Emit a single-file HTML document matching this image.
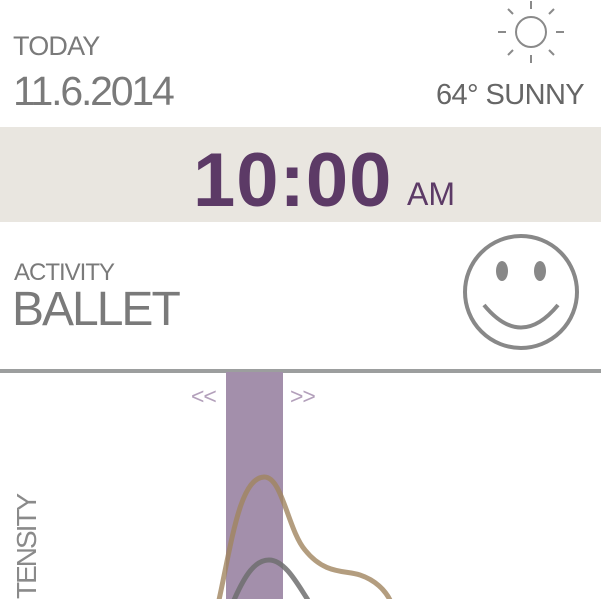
<!DOCTYPE html>
<html><head><style>
body{margin:0;width:601px;height:599px;overflow:hidden;background:#fff;font-family:"Liberation Sans",sans-serif;position:relative}
.t{position:absolute;color:#7a7a7a;white-space:nowrap;line-height:1}
</style></head><body>
<div class="t" style="left:13px;top:33px;font-size:27px;letter-spacing:-0.8px">TODAY</div>
<div class="t" style="left:13px;top:71px;font-size:41px;letter-spacing:-2.2px">11.6.2014</div>
<div class="t" style="left:436px;top:81px;font-size:29px;color:#666;letter-spacing:-0.6px">64° SUNNY</div>
<svg style="position:absolute;left:495px;top:0" width="72" height="66" viewBox="495 0 72 66">
<g stroke="#8a8a8a" stroke-width="2" fill="none">
<circle cx="531" cy="32" r="15"/>
<line x1="531" y1="1" x2="531" y2="9"/><line x1="531" y1="55" x2="531" y2="63"/>
<line x1="498" y1="32" x2="506" y2="32"/><line x1="556" y1="32" x2="564" y2="32"/>
<line x1="508" y1="9" x2="513" y2="14"/><line x1="549" y1="50" x2="554" y2="55"/>
<line x1="554" y1="9" x2="549" y2="14"/><line x1="513" y1="50" x2="508" y2="55"/>
</g></svg>
<div style="position:absolute;left:0;top:127px;width:601px;height:95px;background:#e9e6e0"></div>
<div class="t" style="left:193px;top:143px;font-size:76px;font-weight:bold;color:#5c3a66;letter-spacing:1px">10:00</div>
<div class="t" style="left:407px;top:178px;font-size:32px;color:#5c3a66">AM</div>
<div class="t" style="left:14px;top:261px;font-size:24px;letter-spacing:-1px">ACTIVITY</div>
<div class="t" style="left:12px;top:286px;font-size:48px;letter-spacing:-2px">BALLET</div>
<svg style="position:absolute;left:0;top:0" width="601" height="599">
<circle cx="521" cy="292" r="56" stroke="#888" stroke-width="4" fill="none"/>
<ellipse cx="502" cy="271" rx="6" ry="10" fill="#888"/>
<ellipse cx="540" cy="271" rx="6" ry="10" fill="#888"/>
<path d="M484 305 Q521 350 558 305" stroke="#888" stroke-width="4" fill="none"/>
<rect x="0" y="369" width="601" height="4" fill="#9c9e9e"/>
<rect x="226" y="372" width="57" height="227" fill="#a38fab"/>
<text x="191" y="404" font-size="23" fill="#b3a0bb" font-family="Liberation Sans" letter-spacing="-1">&lt;&lt;</text>
<text x="290" y="404" font-size="23" fill="#b3a0bb" font-family="Liberation Sans" letter-spacing="-1">&gt;&gt;</text>
<path d="M219 600 C232 540 240 478 264 477 C282 476 288 530 305 550 C325 575 345 570 360 575 C375 580 385 590 390 600" stroke="#a0845f" stroke-opacity="0.8" stroke-width="5" fill="none"/>
<path d="M234 600 C245 575 255 560 269 560 C285 560 298 585 308 600" stroke="#6f6f6f" stroke-opacity="0.85" stroke-width="5" fill="none"/>
<text transform="translate(36,599) rotate(-90)" x="0" y="0" font-size="28" fill="#8a8a8a" font-family="Liberation Sans" letter-spacing="-2">TENSITY</text>
</svg>
</body></html>
